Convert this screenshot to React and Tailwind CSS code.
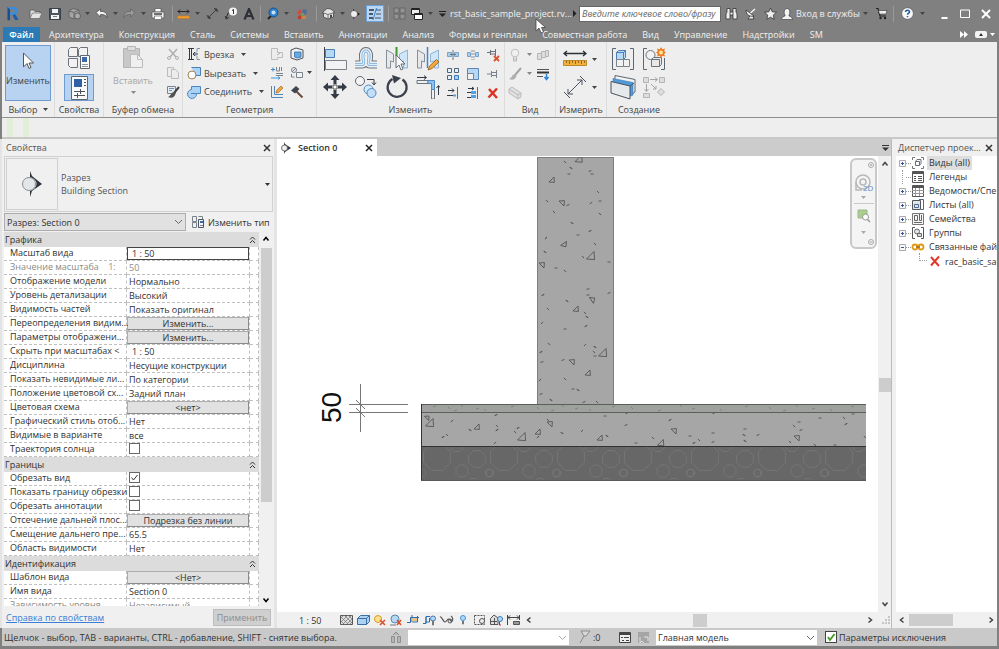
import { useState } from "react";
import clsx from "clsx";

const TABS = [
  "Архитектура",
  "Конструкция",
  "Сталь",
  "Системы",
  "Вставить",
  "Аннотации",
  "Анализ",
  "Формы и генплан",
  "Совместная работа",
  "Вид",
  "Управление",
  "Надстройки",
  "SM",
];

const SECTIONS = [
  {
    title: "Графика",
    rows: [
      { label: "Масштаб вида", value: "1 : 50", kind: "boxed" },
      { label: "Значение масштаба    1:", value: "50", kind: "muted" },
      { label: "Отображение модели", value: "Нормально" },
      { label: "Уровень детализации", value: "Высокий" },
      { label: "Видимость частей", value: "Показать оригинал" },
      { label: "Переопределения видим...", value: "Изменить...", kind: "button" },
      { label: "Параметры отображени...", value: "Изменить...", kind: "button" },
      { label: "Скрыть при масштабах <", value: "1 : 50", kind: "indent" },
      { label: "Дисциплина", value: "Несущие конструкции" },
      { label: "Показать невидимые ли...", value: "По категории" },
      { label: "Положение цветовой сх...", value: "Задний план" },
      { label: "Цветовая схема", value: "<нет>", kind: "button" },
      { label: "Графический стиль отоб...", value: "Нет" },
      { label: "Видимые в варианте", value: "все" },
      { label: "Траектория солнца", value: false, kind: "check" },
    ],
  },
  {
    title: "Границы",
    rows: [
      { label: "Обрезать вид", value: true, kind: "check" },
      { label: "Показать границу обрезки", value: false, kind: "check" },
      { label: "Обрезать аннотации", value: false, kind: "check" },
      { label: "Отсечение дальней плос...", value: "Подрезка без линии", kind: "button" },
      { label: "Смещение дальнего пре...", value: "65.5" },
      { label: "Область видимости", value: "Нет" },
    ],
  },
  {
    title: "Идентификация",
    rows: [
      { label: "Шаблон вида", value: "<Нет>", kind: "button" },
      { label: "Имя вида", value: "Section 0" },
      { label: "Зависимость уровня", value: "Независимый", kind: "muted" },
    ],
  },
];

function Svg({ w = 14, h = w, className, children }) {
  return (
    <svg
      width={w}
      height={h}
      viewBox={`0 0 ${w} ${h}`}
      fill="none"
      className={clsx("shrink-0", className)}
      aria-hidden="true"
    >
      {children}
    </svg>
  );
}

function Caret({ className = "text-[#444]" }) {
  return (
    <Svg w={5} h={3} className={className}>
      <path d="M0 0h5L2.500 3z" fill="currentColor" />
    </Svg>
  );
}

function Chevron({ dir = "down", className = "text-[#444]" }) {
  const paths = {
    down: "M1.500 2.500 4 5.500l2.500-3",
    up: "M1.500 5.500 4 2.500l2.500 3",
    left: "M5.500 1.500 2.500 4l3 2.500",
    right: "M2.500 1.500 5.500 4l-3 2.500",
  };
  return (
    <Svg w={8} className={className}>
      <path d={paths[dir]} stroke="currentColor" strokeWidth="1.500" />
    </Svg>
  );
}

function SelectArrow({ className }) {
  return (
    <Svg w={9} h={6} className={clsx("absolute pointer-events-none", className)}>
      <path d="m1 1 3.500 3.500L8 1" stroke="currentColor" />
    </Svg>
  );
}

function IconButton({ label, className, children }) {
  return (
    <button title={label} className={clsx("flex items-center justify-center", className)}>
      {children}
    </button>
  );
}

function Divider() {
  return <span className="w-1 h-4 flex justify-center"><i className="w-px h-full bg-[#9a9a9a]" /></span>;
}

function QuickAccess() {
  return (
    <div className="flex items-center shrink-0 h-[27px] text-[#303030]">
      <IconButton label="Revit" className="w-[25px] h-full">
        <Svg w={13} h={15}>
          <path d="M1.500 1 4 2.500V14l-2.500.5z" fill="#174f8f" />
          <path d="M1.500 1H8c4.500 0 5 6 1.500 7.500L12.500 14H9L6.500 9H4V6.500h3.500c1.800 0 1.800-3 0-3H4z" fill="#3b8ddb" />
          <path d="M6.500 9 9 14h3.500l-3-5.500z" fill="#1d5da6" />
        </Svg>
      </IconButton>
      <IconButton label="Открыть" className="w-5 h-full">
        <Svg w={13} h={12}>
          <path d="M1 10V2h4l1 1.500h5V5" fill="#ddd" stroke="#555" strokeWidth=".8" />
          <path d="M1 10.500 3.500 5H13l-2.500 5.500z" fill="#e4e4e4" stroke="#666" strokeWidth=".7" />
        </Svg>
      </IconButton>
      <IconButton label="Сохранить" className="w-5 h-full">
        <Svg w={12}>
          <path d="M.5.500h11v11H.5z" fill="#4b535e" stroke="#3a4048" />
          <path d="M3 1h6v4H3zM2 7h8v4H2z" fill="#f2f2f2" />
          <path d="M4 8.500h4" stroke="#777" />
        </Svg>
      </IconButton>
      <IconButton label="Синхронизировать" className="w-[18px] h-full">
        <Svg w={13}>
          <path d="M1 4 5 1.500 11 3v6l-5 3-5-2z" fill="#a4a4a4" stroke="#666" />
          <path d="M1 4l5 1.500L11 3M6 5.500V12" stroke="#666" />
          <circle cx="9.500" cy="9" r="3" fill="#aaa" stroke="#5f5f5f" />
        </Svg>
      </IconButton>
      <IconButton label="Параметры синхронизации" className="w-2 h-full"><Caret /></IconButton>
      <IconButton label="Отменить" className="w-[21px] h-full">
        <Svg w={13} h={11}>
          <path d="M1 4.500 5.500 1v2.500c4-.5 7 1.500 6.500 6.500-1-3-3-3.500-6.500-3.500V9z" fill="#f4f4f4" stroke="#444" strokeWidth=".7" />
        </Svg>
      </IconButton>
      <IconButton label="История отмен" className="w-1.5 h-full"><Caret /></IconButton>
      <IconButton label="Повторить" className="w-[22px] h-full">
        <Svg w={13} h={11}>
          <path d="M12 4.500 7.500 1v2.500C3.500 3 .5 5 1 10c1-3 3-3.500 6.500-3.500V9z" fill="#999" stroke="#606060" strokeWidth=".7" />
        </Svg>
      </IconButton>
      <IconButton label="История повторов" className="w-1.5 h-full"><Caret /></IconButton>
      <IconButton label="Печать" className="w-6 h-full">
        <Svg w={14} h={12}>
          <path d="M4 .5h6V4H4z" fill="#fff" stroke="#555" strokeWidth=".7" />
          <path d="M1 4h12v6H1z" fill="#eee" stroke="#555" strokeWidth=".7" />
          <path d="M3 6h8" stroke="#444" strokeWidth="1.500" />
          <path d="M3.500 8h7v3.500h-7z" fill="#fff" stroke="#666" strokeWidth=".7" />
        </Svg>
      </IconButton>
      <Divider />
      <IconButton label="Измерить" className="w-[18px] h-full">
        <Svg w={13} h={12}>
          <path d="M1 3.500h11M3 1.500l-2 2 2 2M10 1.500l2 2-2 2" stroke="#222" />
          <path d="M.5 8h12v2.500H.5z" fill="#f0a030" stroke="#c8701a" strokeWidth=".6" />
        </Svg>
      </IconButton>
      <IconButton label="Варианты измерения" className="w-2.5 h-full"><Caret /></IconButton>
      <IconButton label="Параллельный размер" className="w-5 h-full">
        <Svg w={13}>
          <path d="M2 11 11 2M1 8.500l3.500 3.500M8.500 1 12 4.500M2 8v3h3M8 2h3v3" stroke="#2e2e2e" strokeWidth=".8" />
        </Svg>
      </IconButton>
      <IconButton label="Марка" className="w-[18px] h-full">
        <Svg w={13}>
          <circle cx="8" cy="4.500" r="4" fill="#f5f5f5" />
          <path d="M7 3.500 8.500 2.500V7" stroke="#333" />
          <path d="M1 12l2-6h1M1 12l3-1.500M1 12 .500 9" stroke="#333" />
        </Svg>
      </IconButton>
      <IconButton label="Текст" className="w-[18px] h-full">
        <Svg w={12}>
          <path d="M1.500 11.500 6 1l4.500 10.500M3 8h6" stroke="#2c2f33" strokeWidth="2.200" />
        </Svg>
      </IconButton>
      <Divider />
      <IconButton label="3D вид" className="w-5 h-full">
        <Svg w={13}>
          <path d="m2 12 4-4" stroke="#222" strokeWidth="2" />
          <circle cx="7.500" cy="5.500" r="4.500" fill="#2f83d0" stroke="#174f86" />
          <circle cx="7.500" cy="5.500" r="2" fill="#c5e1f8" />
        </Svg>
      </IconButton>
      <IconButton label="Варианты вида" className="w-2 h-full"><Caret /></IconButton>
      <IconButton label="Визуализация" className="w-6 h-full">
        <Svg w={12}>
          <path d="M1 4.500 4 1l2 3-3 3z" fill="#d8483c" />
          <path d="M2 8l3-1v4H2z" fill="#c33a30" />
          <path d="m7 1 4 1-1 5-4-2z" fill="#4f6f96" />
          <path d="m6 7 4 1v3H6z" fill="#c58645" />
          <path d="M5 5h3v3H5z" fill="#6c9a58" />
        </Svg>
      </IconButton>
      <Divider />
      <IconButton label="3D вид по умолчанию" className="w-5 h-full">
        <Svg w={13}>
          <path d="M0 6 5 1.500 9 2l4 3.500-1.500.5v4L6 12l-4.500-2V6z" fill="#e4e4e4" stroke="#444" strokeWidth=".8" />
          <path d="m1.500 6 4.500 1.500L12 5.500M6 7.500V12" stroke="#555" strokeWidth=".8" />
          <path d="M8 8l2-.5v3L8 11z" fill="#444" />
        </Svg>
      </IconButton>
      <IconButton label="Варианты 3D вида" className="w-2 h-full"><Caret /></IconButton>
      <IconButton label="Разрез" className="w-[18px] h-full">
        <Svg w={12}>
          <path d="M4 1 11 6 4 11z" fill="#222" />
          <circle cx="5" cy="6" r="3.500" fill="#eee" stroke="#444" strokeWidth=".6" />
        </Svg>
      </IconButton>
      <IconButton label="Тонкие линии" className="w-[18px] h-[17px] mx-0.5 bg-[#b9d6f3] border border-[#6ba0d8]">
        <Svg w={14}>
          <path d="M1 3h5M1 7h4M1 11h4" stroke="#26313f" strokeWidth="1.500" />
          <path d="M8 3h5M8 7h5M7 11h6" stroke="#26313f" strokeWidth=".8" />
          <path d="M8.500 1 5 13" stroke="#3682c9" />
        </Svg>
      </IconButton>
      <Divider />
      <IconButton label="Закрыть неактивные" className="w-[18px] h-full">
        <Svg w={13}>
          <path d="M1 1h5v5H1zM7 1h5v5H7zM1 7h5v5H1zM7 7h5v5H7z" fill="#929292" stroke="#5f5f5f" strokeWidth=".8" />
        </Svg>
      </IconButton>
      <IconButton label="Переключение окон" className="w-[18px] h-full">
        <Svg w={14}>
          <path d="M1.500 1.500h8v6h-8z" fill="#eee" stroke="#222" />
          <path d="M4.500 6.500h8v6h-8z" fill="#fff" stroke="#222" />
          <path d="M1 2.500h9M4 7.500h9" stroke="#222" />
        </Svg>
      </IconButton>
      <IconButton label="Список окон" className="w-2 h-full"><Caret /></IconButton>
      <IconButton label="Настройка панели" className="w-4 h-full">
        <Svg w={7} h={6}>
          <path d="M0 .5h7" stroke="#222" />
          <path d="M0 2.500h7L3.500 6z" fill="#222" />
        </Svg>
      </IconButton>
    </div>
  );
}

function TitleBar() {
  return (
    <header className="flex items-center h-[27px] bg-[#808080] text-[#f0f0f0]">
      <QuickAccess />
      <h1 className="w-[122px] shrink-0 whitespace-nowrap">rst_basic_sample_project.rv...</h1>
      <Svg w={5} h={7} className="mr-0.5">
        <path d="M1 0v7l3.500-3.500z" fill="#222" />
      </Svg>
      <input
        aria-label="Поиск"
        placeholder="Введите ключевое слово/фразу"
        className="w-[142px] h-4 px-0.5 bg-white border border-[#666] italic placeholder:text-[#666] text-black"
      />
      <IconButton label="Поиск" className="w-5 h-full">
        <Svg w={13}>
          <path d="M2 1.500h3V5h3V1.500h3V5l1 2v5H8V8H5v4H1V7l1-2z" fill="#eee" stroke="#333" strokeWidth=".8" />
          <path d="M5 5v3M8 5v3" stroke="#333" strokeWidth=".8" />
        </Svg>
      </IconButton>
      <IconButton label="Связь" className="w-5 h-full">
        <Svg w={12}>
          <path d="M1 2c0 5 4 7 8 6zM5 8l-2 3h6L8 8" fill="#eee" stroke="#333" strokeWidth=".8" />
          <path d="m5.500 5 4.500-4" stroke="#fff" strokeWidth="1.200" />
        </Svg>
      </IconButton>
      <IconButton label="Избранное" className="w-[18px] h-full">
        <Svg w={13}>
          <path d="m6.500 1 1.700 3.800 4.300.4-3.200 2.900.9 4.200-3.700-2.100-3.700 2.100.9-4.200L.5 5.200l4.300-.4z" fill="#eee" stroke="#333" strokeWidth=".8" />
        </Svg>
      </IconButton>
      <button className="flex items-center h-full gap-[3px] pl-0.5">
        <Svg w={12}>
          <path d="M.5 11.500c0-2 2-3 3.500-3.500V7C2.500 5 3 .5 6 .5S9.500 5 8 7v1c1.500.5 3.500 1.500 3.500 3.500z" fill="#f2f2f2" stroke="#333" strokeWidth=".6" />
        </Svg>
        <span className="whitespace-nowrap">Вход в службы</span>
        <Caret />
      </button>
      <IconButton label="Магазин" className="ml-1 w-5 h-full">
        <Svg w={13}>
          <path d="M1 1.500h2L5 9h6" stroke="#222" strokeWidth="1.200" />
          <path d="M3.500 3.500H12L11 7H4.500z" fill="#f0f0f0" stroke="#333" strokeWidth=".6" />
          <circle cx="5.500" cy="11" r="1.200" fill="#222" />
          <circle cx="10" cy="11" r="1.200" fill="#222" />
        </Svg>
      </IconButton>
      <Divider />
      <IconButton label="Справка" className="w-6 h-full">
        <Svg w={13}>
          <circle cx="6.500" cy="6.500" r="5.800" fill="#f8f8f8" stroke="#555" strokeWidth=".6" />
          <path d="M4.500 5c0-2.500 4-2.500 4 0 0 1.200-2 1.300-2 2.800M6.500 9v1.300" stroke="#2458a8" strokeWidth="1.500" />
        </Svg>
      </IconButton>
      <Caret />
      <div className="flex items-center gap-[11px] ml-auto mr-2 h-full">
        <button title="Свернуть" className="h-full">
          <Svg w={9} h={10}><path d="M1.500 9h6" stroke="#fff" strokeWidth="2" /></Svg>
        </button>
        <button title="Развернуть" className="h-full">
          <Svg w={10} h={9}><path d="M.5 1h9v7.500h-9z" stroke="#fff" /></Svg>
        </button>
        <button title="Закрыть" className="h-full">
          <Svg w={10}><path d="m1 1 8 8M9 1 1 9" stroke="#fff" strokeWidth="2" /></Svg>
        </button>
      </div>
    </header>
  );
}

function TabBar() {
  return (
    <nav className="flex items-center h-[15px] pl-[3px] bg-[#808080] text-[#f0f0f0]">
      <button className="w-[37px] h-full mr-[9px] bg-[#2b79b5] text-white font-semibold">Файл</button>
      <div className="flex gap-[15px]">
        {TABS.map((tab) => (
          <button key={tab} className="whitespace-nowrap">
            {tab}
          </button>
        ))}
      </div>
      <div className="flex items-center gap-[7px] ml-auto mr-[4px]">
        <Svg w={8} h={7}><path d="M0 0v7l4-3.500zM4 0v7l4-3.500z" fill="#fff" /></Svg>
        <Svg w={12} h={7}>
          <rect width="12" height="7" rx="2" fill="#f4f4f4" />
          <path d="M4 5h4L6 2z" fill="#333" />
        </Svg>
        <Caret className="text-white -ml-1" />
      </div>
    </nav>
  );
}

function Panel({ title, className, bodyClass, children }) {
  return (
    <section className={clsx("flex flex-col border-r border-[#dcdcdc]", className)}>
      <div className={clsx("h-[59px]", bodyClass)}>{children}</div>
      <h2 className="h-4 flex items-center justify-center gap-[5px] whitespace-nowrap">{title}</h2>
    </section>
  );
}

// two facing elements with a gap for the axis, reused by the mirror icons
function MirrorShapes() {
  return (
    <>
      <path d="M1.500 3v18h4v-7l3 1V7z" fill="#e6e8ea" stroke="#87909a" />
      <path d="M22.500 3v18h-4v-7l-4 1V7z" fill="#cfe5f8" stroke="#8fb4d4" />
    </>
  );
}

const big = {
  align: (
    <Svg w={24}>
      <path d="M1.500 0v24" stroke="#3f4650" />
      <path d="M2.500 2.500h9v8h-9z" fill="#b7d8f5" stroke="#4a7fb5" />
      <path d="M2.500 13.500h21v9h-21z" fill="#f2f2f2" stroke="#7a828b" />
    </Svg>
  ),
  offset: (
    <Svg w={24}>
      <path d="M1 17.500h7c3 0 1-4 1-7.500C8 2 16 2 15 10c0 3.500-2 7.500 1 7.500h7" stroke="#6b747d" strokeWidth="8" />
      <path d="M1 17.500h7c3 0 1-4 1-7.500C8 2 16 2 15 10c0 3.500-2 7.500 1 7.500h7" stroke="#f0f0f0" strokeWidth="6" />
      <path d="M1 17.500h7c3 0 1-4 1-7.500C8 2 16 2 15 10c0 3.500-2 7.500 1 7.500h7" stroke="#6fa8da" strokeWidth="3" />
      <path d="M1 17.500h7c3 0 1-4 1-7.500C8 2 16 2 15 10c0 3.500-2 7.500 1 7.500h7" stroke="#dcecf9" strokeWidth="1.500" />
    </Svg>
  ),
  mirrorPick: (
    <Svg w={24}>
      <MirrorShapes />
      <path d="M11.500 0v9" stroke="#3f9a32" strokeWidth="2" />
      <path d="M11 8v13l3-3 2 5 2-1-2-5h4z" fill="#f8f8f8" stroke="#59616b" strokeWidth=".9" />
    </Svg>
  ),
  mirrorDraw: (
    <Svg w={24}>
      <MirrorShapes />
      <path d="M11.500 0v21" stroke="#3c87c8" strokeWidth="1.500" />
      <path d="m12 23 1.500-4 7-6.500 2.500 2.500-7 6.500z" fill="#f3a73c" stroke="#8d5a15" strokeWidth=".8" />
    </Svg>
  ),
  move: (
    <Svg w={24}>
      <path d="M12 0 7.500 5h3v4h3V5h3zM12 24l-4.500-5h3v-4h3v4h3zM0 12l5-4.500v3h4v3H5v3zM24 12l-5-4.500v3h-4v3h4v3z" fill="#343b46" />
      <path d="M10 10h4v4h-4z" fill="#fff" stroke="#555" />
    </Svg>
  ),
  copy: (
    <Svg w={24}>
      <circle cx="6" cy="6" r="4.500" fill="#f4f4f4" stroke="#5d6771" />
      <path d="M13 4.500h7V9m-2-1.500L20 10l2-2.500" stroke="#343b46" />
      <circle cx="14.500" cy="14.500" r="4.500" fill="#d5e9fa" stroke="#4f8ac2" />
      <circle cx="17.500" cy="18" r="4.500" fill="#c3dff8" stroke="#4f8ac2" />
    </Svg>
  ),
  rotate: (
    <Svg w={24}>
      <path d="M17.500 4.500A9.500 9.500 0 1 1 7.500 4" stroke="#3a414c" strokeWidth="2.200" />
      <path d="m7 0 9 3-7 5.500z" fill="#3a414c" />
    </Svg>
  ),
  trim: (
    <Svg w={24}>
      <path d="M1 5.500h11v3H1zM15.500 14h3v10h-3z" fill="#f1f1f1" stroke="#6b747d" />
      <path d="M12 5.500h6.500v9h-3v-6H12z" fill="#8fc3ee" stroke="#4f8ac2" />
      <path d="M1 2.500h9m-2-2 2.500 2L8 4.500M22.500 20v-9m-2 2 2-2.500 1.500 2" stroke="#343b46" />
    </Svg>
  ),
  measure: (
    <Svg w={24}>
      <path d="M1 6.500h22M4 4 1 6.500 4 9M20 4l3 2.500L20 9" stroke="#2b3038" strokeWidth="1.300" />
      <path d="M.5 13.500h23v5H.5z" fill="#f2b23a" stroke="#c08a2c" />
      <path d="M3.500 14v2M6.500 14v3M9.500 14v2M12.500 14v3M15.500 14v2M18.500 14v3M21.500 14v2" stroke="#7a5210" strokeWidth=".8" />
    </Svg>
  ),
  dimension: (
    <Svg w={24}>
      <path d="M5 19 19 5M1 17l6 6M17 1l6 6M5 14v5h5M14 5h5v5" stroke="#4b535e" />
    </Svg>
  ),
  assembly: (
    <Svg w={24}>
      <path d="M5 1.500H1.500v21H5M19 1.500h3.500v21H19" stroke="#5d6771" />
      <path d="M5.500 5.500h7l2-2h-7zM5.500 5.500v7h7v-7zM12.500 5.500l2-2v7l-2 2z" fill="#b8daf6" stroke="#4a7fb5" />
      <path d="M5.500 12.500h7v7h-7zM12.500 12.500h6v7h-6z" fill="#f1f1f1" stroke="#7a828b" />
    </Svg>
  ),
  group: (
    <Svg w={24}>
      <path d="M5 1.500H1.500v21H5M22.500 11v11.500H19" stroke="#5d6771" />
      <circle cx="8.500" cy="8" r="4.500" fill="#f3f3f3" stroke="#6b747d" />
      <path d="M9.500 12.500h8v7h-8zM9.500 12.500l2-2h8v7l-2 2" fill="#e8e8e8" stroke="#6b747d" />
      <path d="m19 0 1.300 2.300L23 1.500l-.8 2.700L24 5.500l-1.800 1.300.8 2.700-2.700-.8L19 11l-1.300-2.300-2.700.8.8-2.700L14 5.500l1.800-1.300L15 1.500l2.700.8z" fill="#ee7d22" />
      <circle cx="19" cy="5.500" r="2" fill="#ffe89a" />
    </Svg>
  ),
  parts: (
    <Svg w={26}>
      <path d="m5 1.500 20 4V18l-3 2L5 15z" fill="#f3f3f3" stroke="#5d6771" />
      <path d="m3 4.500 20 4V21l-2 1L3 17z" fill="#4f9bdc" stroke="#3a78b0" strokeWidth=".6" />
      <path d="m1 7.500 19 4.500v13L1 19z" fill="#e6e9ec" stroke="#4b535e" />
      <path d="m20 12 4-3" stroke="#4b535e" />
    </Svg>
  ),
  similar: (
    <Svg w={24}>
      <path d="M1.500 2.500h5v5h-5zM17.500 2.500h5v5h-5zM1.500 18.500h6v4h-6zM19 13.500l3.500 3.500-3.500 3.500-3.500-3.500z" fill="#ddd" stroke="#b5b5b5" />
      <path d="M8 4.500h7m-2-2 2.500 2-2.500 2M4.500 9v7m-2-2 2 2.500 2-2.500M9 9l5 5m0-3v3h-3" stroke="#a5a5a5" />
    </Svg>
  ),
};

const small = {
  cut: <Svg><path d="M3 2l7 8M11 2l-7 8" stroke="#b0b0b0" strokeWidth="1.500" /><circle cx="3" cy="11" r="1.500" stroke="#b0b0b0" /><circle cx="11" cy="11" r="1.500" stroke="#b0b0b0" /></Svg>,
  copyClip: <Svg><path d="M1.500 1.500h6v9h-6z" fill="#ececec" stroke="#bcbcbc" /><path d="M5.500 3.500h4l3 3v6h-7z" fill="#ececec" stroke="#bcbcbc" /></Svg>,
  match: <Svg><path d="M1.500 1.500h8v7h-8z" fill="#e9edf1" stroke="#7a828b" /><path d="M3 3.500h5M3 5.500h3" stroke="#6c90b8" /><path d="m13 2-5 6" stroke="#444" strokeWidth="2" /><path d="M8 7c-3 0-3 4-6 5 4 2 7 0 7.500-3.500z" fill="#555" /></Svg>,
  cope: <Svg><path d="M1 1.500h6M1 12.500h6M2.500 2v10M4.500 2v10M11 7H6.500M8 5 6 7l2 2" stroke="#343b46" /><path d="M13 1.500h-3v3L8.500 6M8.500 8l1.500 1.500v3h3" stroke="#8b939b" /></Svg>,
  cutGeom: <Svg><path d="M4.500 1.500h9v8H8" fill="#a9d2f5" stroke="#4a7fb5" /><circle cx="5" cy="9" r="4" fill="#fff" stroke="#a08050" /></Svg>,
  join: <Svg><path d="M4.500 1.500h9v7H9.500a4.500 4.500 0 1 1-5-4z" fill="#a9d2f5" stroke="#4a86bd" /><path d="M4 8.500h5" stroke="#4a86bd" /></Svg>,
  joinRoof: <Svg><path d="M1.500 1.500h6v4h5v5h-5v2h-6z" fill="#ececec" stroke="#bcbcbc" /><path d="m7 8 3-2" stroke="#b0b0b0" /></Svg>,
  wallJoin: <Svg><path d="M1 3.500h4M3 1.500v4" stroke="#3c87c8" /><path d="M6.500 1v4h3V1M11.500 1v4M6 7.500h7M6 9.500h7" stroke="#7a828b" /><path d="M1 12h9m-2-1.500L10 12l-2 1.500" stroke="#3c97e0" /></Svg>,
  beam: <Svg><path d="M1.500 1v11.500H13M4.500 1v8.500H13" stroke="#4f86ba" /><path d="m6 8 .5-2.500 4.500-4.500 2 2-4.500 4.500z" fill="#f3a73c" stroke="#8d5a15" strokeWidth=".6" /></Svg>,
  face: <Svg><path d="m1 3 5-2 7 2v8l-6 2-6-2z" fill="#f0f0f0" stroke="#4b535e" /><path d="M4.500 5h6.500v5l-4 1-2.500-1z" fill="#6aa9e0" stroke="#2f6ca8" strokeWidth=".8" /></Svg>,
  split: <Svg><circle cx="4" cy="4" r="2.500" stroke="#7a828b" /><path d="M6.500 6.500h6v5h-6zM1.500 8v3h3M2 6l4-4" fill="#f4f4f4" stroke="#7a828b" /></Svg>,
  demolish: <Svg><path d="m6 6 6.500 6.500" stroke="#6b4a38" strokeWidth="2" /><path d="M1 5.500 6 1l3.500 3L5 8.500z" fill="#3f4650" /></Svg>,
  splitEl: <Svg><path d="M1.500 4.500h4v4h-4zM8.500 4.500h4v4h-4z" fill="#a8cff2" stroke="#7ba3c9" /><path d="M7 2v10M4 6.500h6" stroke="#6b747d" /></Svg>,
  splitGap: <Svg><path d="M1.500 4.500h3v4h-3zM9.500 4.500h3v4h-3z" fill="#a8cff2" stroke="#7ba3c9" /><path d="M6 2v10M8 2v10" stroke="#8b939b" strokeDasharray="2 1" /></Svg>,
  unpin: <Svg><path d="M1 4.500h3M4.500 2v5M5 3.500h4M5 6h4M9.500 1v7" stroke="#68707a" /><path d="m8 8 5 5M13 8l-5 5" stroke="#d8512a" strokeWidth="1.800" /></Svg>,
  array: <Svg><path d="M1.500 1.500h4v4h-4zM8.500 1.500h4v4h-4zM1.500 8.500h4v4h-4z" fill="#e8f2fa" stroke="#4f6478" /><path d="M8.500 8.500h4v4h-4z" fill="#a8cff2" stroke="#3c79b5" /></Svg>,
  scale: <Svg><path d="M1.500 1.500h11v11h-11z" fill="#b7d8f5" stroke="#5b88b3" /><path d="M1.500 6.500h6v6h-6z" fill="#f1f1f1" stroke="#7a828b" /></Svg>,
  pin: <Svg><path d="M1 7h4M5.500 4v6M6 5.500h4M6 8.500h4M10.500 3v8" stroke="#7a828b" /></Svg>,
  extend: <Svg><path d="M2 4.500h6M6 2.500l2 2-2 2M1 9.500h7" stroke="#343b46" /><path d="M7 9.500h3" stroke="#4fa0e5" strokeWidth="2" /><path d="M11.500 1v12" stroke="#5d6771" /></Svg>,
  extendMany: <Svg><path d="M2 2.500h6M6 1l2 1.500L6 4M1 6.500h5M1 11.500h5" stroke="#343b46" /><path d="M5 6.500h5M5 10.500h5" stroke="#4fa0e5" strokeWidth="3" /><path d="M11.500 1v12" stroke="#5d6771" /></Svg>,
  remove: <Svg><path d="m3 3 8 9M11 2.500 2.500 11.500" stroke="#dd3322" strokeWidth="2.500" /></Svg>,
  bulb: <Svg><circle cx="7" cy="5" r="3.800" fill="#f0f0f0" stroke="#c0c0c0" /><path d="M5.500 9v4h3V9M5.500 11h3" stroke="#b8b8b8" /></Svg>,
  boxes: <Svg><path d="M1.500 5.500h4v6h-4zM5.500 3.500h4v6h-4zM9.500 2.500h3v6h-3z" fill="#ddd" stroke="#b5b5b5" /></Svg>,
  brush: <Svg><path d="m13 1-6 7" stroke="#a5a5a5" strokeWidth="2" /><path d="M7 7c-3 0-3 4-6 5 4 2 7 0 7.500-3.500z" fill="#b0b0b0" /></Svg>,
  linework: <Svg><path d="M1 2.500h12" stroke="#555" /><path d="M1 5.500h12" stroke="#333" strokeWidth="2" /><path d="M1 9.500h6" stroke="#555" /><path d="M10.500 7v5m-2-2 2 2.500 2-2.500" stroke="#2f86d8" strokeWidth="1.500" /></Svg>,
  hideBox: <Svg><path d="m1 3 3-2 9 6v4l-3 2-9-6z" fill="#e0e0e0" stroke="#bcbcbc" /><path d="m1 3 9 6 3-2M10 9v4" stroke="#bcbcbc" /></Svg>,
};

function ToolText({ icon, children }) {
  return (
    <button className="flex items-center gap-[3px] h-[19px] whitespace-nowrap">
      {icon}
      {children}
      <Caret className="text-[#444] ml-1" />
    </button>
  );
}

function Cell({ children, className, name }) {
  return (
    <button title={name} className={clsx("flex items-center justify-center", className)}>
      {children}
    </button>
  );
}

function Ribbon() {
  return (
    <div className="flex h-[75px] mx-0.5 bg-[#eee] text-[#444]">
      <Panel
        className="w-[53px]"
        bodyClass="pt-[3px] px-[3px]"
        title={<>Выбор <Caret /></>}
      >
        <button className="w-full h-14 flex flex-col items-center gap-1 pt-1.5 bg-[#b7d3f1] border border-[#6f9bd1]">
          <Svg w={12} h={18}>
            <path d="M1.500 1v14l3.500-3.500 2 5 2-1-2-4.500h4.500z" fill="#fff" stroke="#555" />
          </Svg>
          Изменить
        </button>
      </Panel>
      <Panel title="Свойства" className="w-[49px]" bodyClass="pt-1 flex flex-col items-center gap-1">
        <button title="Свойства типа">
          <Svg w={24}>
            <path d="m1.500 3.500 2-2h7v9h-9zM11.500 3.500l2-2h7v9h-9zM1.500 12.500h9v9h-7l-2-2z" fill="#f2f2f2" stroke="#6b747d" />
            <path d="M13.500 9.500h9v13h-9z" fill="#fafafa" stroke="#5d6771" />
            <path d="M15 11h5v5h-5z" fill="#3a68ab" />
            <path d="M15 18.500h6M15 20.500h6" stroke="#8b939b" />
          </Svg>
        </button>
        <button title="Свойства" className="w-[30px] h-[27px] flex items-center justify-center bg-[#b7d3f1] border border-[#6f9bd1]">
          <Svg w={17} h={24}>
            <path d="M.5.500h16v23H.5z" fill="#fafafa" stroke="#5d6771" />
            <path d="M3 3h8v8H3z" fill="#2f5fa5" />
            <path d="M13 3.500h2M13 6.500h2M13 9.500h2M3 15.500h11M3 19.500h11M9.500 13v5M6.500 17v5" stroke="#4b535e" />
          </Svg>
        </button>
      </Panel>
      <Panel title="Буфер обмена" className="w-[79px]" bodyClass="flex pt-[3px] pl-[7px]">
        <button className="w-11 flex flex-col items-center gap-1 text-[#a6a6a6]">
          <Svg w={22} h={24}>
            <path d="M1.500 3.500h16v19h-16z" fill="#c8c8c8" stroke="#b5b5b5" />
            <path d="M5.500 1.500h8v4h-8z" fill="#ddd" stroke="#b5b5b5" />
            <path d="M8.500 9.500h7l5 5v8h-12z" fill="#f0f0f0" stroke="#bcbcbc" />
            <path d="M15.500 9.500v5h5" stroke="#bcbcbc" />
          </Svg>
          <span className="leading-4">Вставить</span>
          <Caret className="text-[#888] -mt-0.5" />
        </button>
        <div className="flex flex-col pl-2">
          <Cell name="Вырезать" className="size-[19px]">{small.cut}</Cell>
          <Cell name="Копировать" className="size-[19px]">{small.copyClip}</Cell>
          <Cell name="Копировать свойства" className="size-[19px]">{small.match}</Cell>
        </div>
      </Panel>
      <Panel title="Геометрия" className="w-[134px]" bodyClass="flex pt-[3px] pl-1">
        <div className="w-20 flex flex-col items-start">
          <ToolText icon={small.cope}>Врезка</ToolText>
          <ToolText icon={small.cutGeom}>Вырезать</ToolText>
          <ToolText icon={small.join}>Соединить</ToolText>
        </div>
        <div className="flex flex-col">
          <Cell name="Соединить крыши" className="w-5 h-[19px]">{small.joinRoof}</Cell>
          <Cell name="Соединение стен" className="w-5 h-[19px]">{small.wallJoin}</Cell>
          <Cell name="Соединение балок" className="w-5 h-[19px]">{small.beam}</Cell>
        </div>
        <div className="flex flex-col">
          <Cell name="Разделить грань" className="w-5 h-[19px]">{small.face}</Cell>
          <Cell name="Краска" className="w-5 h-[19px]">{small.split}</Cell>
          <Cell name="Снос" className="w-5 h-[19px]">{small.demolish}</Cell>
        </div>
        <div className="flex items-center pb-0.5"><Caret /></div>
      </Panel>
      <Panel title="Изменить" className="w-[188px]" bodyClass="flex pt-[3px] pl-0.5">
        <div className="grid grid-cols-4 w-[124px] h-14">
          <Cell name="Выровнять">{big.align}</Cell>
          <Cell name="Смещение">{big.offset}</Cell>
          <Cell name="Зеркало - выбрать ось">{big.mirrorPick}</Cell>
          <Cell name="Зеркало - нарисовать ось">{big.mirrorDraw}</Cell>
          <Cell name="Переместить">{big.move}</Cell>
          <Cell name="Копировать">{big.copy}</Cell>
          <Cell name="Повернуть">{big.rotate}</Cell>
          <Cell name="Обрезать">{big.trim}</Cell>
        </div>
        <div className="grid grid-cols-3 w-[60px] h-[57px]">
          <Cell name="Разделить">{small.splitEl}</Cell>
          <Cell name="Разделить с зазором">{small.splitGap}</Cell>
          <Cell name="Снять закрепление">{small.unpin}</Cell>
          <Cell name="Массив">{small.array}</Cell>
          <Cell name="Масштаб">{small.scale}</Cell>
          <Cell name="Закрепить">{small.pin}</Cell>
          <Cell name="Удлинить">{small.extend}</Cell>
          <Cell name="Удлинить несколько">{small.extendMany}</Cell>
          <Cell name="Удалить">{small.remove}</Cell>
        </div>
      </Panel>
      <Panel title="Вид" className="w-[51px]" bodyClass="flex pt-[3px]">
        <div className="grid grid-cols-[20px_8px_20px] h-[57px] items-center justify-items-center">
          <Cell name="Показать">{small.bulb}</Cell>
          <Caret className="text-[#888]" />
          <Cell name="Переместить категорию">{small.boxes}</Cell>
          <Cell name="Переопределить">{small.brush}</Cell>
          <Caret className="text-[#888]" />
          <Cell name="Линии">{small.linework}</Cell>
          <Cell name="Рамка выбора">{small.hideBox}</Cell>
        </div>
      </Panel>
      <Panel title="Измерить" className="w-[51px]" bodyClass="pt-[3px] pl-[7px]">
        <div className="grid grid-cols-[24px_14px] h-14 items-center justify-items-center">
          <Cell name="Линейка">{big.measure}</Cell>
          <Caret />
          <Cell name="Размер">{big.dimension}</Cell>
          <Caret />
        </div>
      </Panel>
      <Panel title="Создание" className="w-[64px] border-r-0" bodyClass="pt-[3px]">
        <div className="grid grid-cols-2 w-[62px] h-14">
          <Cell name="Создать сборку">{big.assembly}</Cell>
          <Cell name="Создать группу">{big.group}</Cell>
          <Cell name="Создать части">{big.parts}</Cell>
          <Cell name="Создать подобный">{big.similar}</Cell>
        </div>
      </Panel>
    </div>
  );
}

function PropValue({ id, row }) {
  const [checked, setChecked] = useState(row.value === true);

  if (row.kind === "button") {
    return (
      <button
        id={id}
        className="block w-full h-[13px] leading-[11px] bg-[#e1e1e1] border border-[#adadad] border-b-[#8a8a8a] border-r-[#8a8a8a]"
      >
        {row.value}
      </button>
    );
  }
  if (row.kind === "check") {
    return (
      <span className="relative block size-[11px] ml-0.5">
        <input
          id={id}
          type="checkbox"
          checked={checked}
          onChange={(e) => setChecked(e.target.checked)}
          className="block appearance-none size-[11px] bg-white border border-[#666]"
        />
        {checked && (
          <Svg w={11} className="absolute inset-0 pointer-events-none">
            <path d="m2.500 5.500 2 2.500 4-5" stroke="#333" />
          </Svg>
        )}
      </span>
    );
  }
  return (
    <input
      id={id}
      defaultValue={row.value}
      className={clsx(
        "block w-full bg-transparent",
        row.kind === "boxed" ? "h-[13px] border border-[#444] pl-1" : "h-3",
        row.kind === "indent" && "pl-[5px]",
        row.kind === "muted" && "text-[#8b8b83]",
        row.kind !== "boxed" && row.kind !== "indent" && "pl-0.5",
      )}
    />
  );
}

function PropertiesPalette() {
  return (
    <aside className="flex flex-col w-[272px] shrink-0 ml-0.5 pl-0.5 bg-[#f0f0f0]">
      <div className="flex items-center h-[17px] px-0.5 text-[#555]">
        <h2 className="grow">Свойства</h2>
        <button title="Закрыть" className="mr-px">
          <Svg w={8}><path d="m1 1 6 6M7 1 1 7" stroke="#333" strokeWidth="1.500" /></Svg>
        </button>
      </div>
      <button className="flex items-center h-14 border border-[#d0d0d0] mr-px text-left text-[#555]">
        <span className="w-[52px] h-[52px] ml-px flex items-center justify-center border border-[#cfcfcf]">
          <Svg w={22} h={26}>
            <path d="M9 0v6.500a6.500 6.500 0 0 1 0 13V26l2-6 10-7L11 5z" fill="#2e333b" />
            <circle cx="8" cy="13" r="6.500" fill="#e4e5e8" stroke="#8a8d92" />
          </Svg>
        </span>
        <span className="grow pl-[3px] leading-[13px]">
          Разрез
          <br />
          Building Section
        </span>
        <Caret className="text-[#333] mr-0.5" />
      </button>
      <div className="flex h-[18px] my-px">
        <label className="relative w-[182px]">
          <select
            aria-label="Экземпляр"
            className="appearance-none w-full h-full pl-0.5 bg-[#e1e1e1] border border-[#adadad] text-[#333]"
          >
            <option>Разрез: Section 0</option>
          </select>
          <SelectArrow className="right-[3px] top-1.5 text-[#666]" />
        </label>
        <button className="flex items-center gap-[3px] pl-[5px] text-[#333] whitespace-nowrap">
          <Svg w={14}>
            <path d="M1.500 1.500h4v5h-4zM1.500 7.500h4v5h-4zM7.500 1.500h4v3" stroke="#7a828b" />
            <path d="M7.500 4.500h5v8h-5z" fill="#f2f5f8" stroke="#4b535e" />
            <path d="M9 6h3v2H9z" fill="#3a68ab" />
            <path d="M9 10.500h3" stroke="#7a828b" />
          </Svg>
          Изменить тип
        </button>
      </div>
      <div className="flex grow basis-0 min-h-0 overflow-hidden">
        <div className="w-[255px] overflow-hidden bg-white">
          <table className="w-full table-fixed border-separate border-spacing-0 leading-[13px] text-[#2f3133]">
            <colgroup>
              <col className="w-[123px]" />
              <col className="w-[123px]" />
              <col />
            </colgroup>
            {SECTIONS.map((section, s) => (
              <tbody key={section.title}>
                <tr>
                  <th colSpan={2} className="h-[15px] p-0 pl-px bg-[#dcdcdc] text-left font-normal">
                    {section.title}
                  </th>
                  <td className="h-[15px] p-0 bg-[#dcdcdc]">
                    <button title="Свернуть" className="block -ml-px">
                      <Svg w={7} h={8}><path d="m1 3.500 2.500-2.500L6 3.500M1 7l2.500-2.500L6 7" stroke="#333" /></Svg>
                    </button>
                  </td>
                </tr>
                {section.rows.map((row, r) => {
                  const id = `prop-${s}-${r}`;
                  return (
                    <tr key={id}>
                      <td
                        className={clsx(
                          "h-[14px] p-0 pl-1.5 border-b border-r border-dashed border-[#c0c0c0] whitespace-pre",
                          row.kind === "muted" && "text-[#8b8b83]",
                        )}
                      >
                        <label htmlFor={id} className="block h-[13px] leading-3">{row.label}</label>
                      </td>
                      <td className="h-[14px] p-0 border-b border-r border-dashed border-[#c0c0c0] align-top">
                        <PropValue id={id} row={row} />
                      </td>
                      <td className="h-[14px] p-0 border-b border-r border-dashed border-[#c0c0c0]" />
                    </tr>
                  );
                })}
              </tbody>
            ))}
          </table>
        </div>
        <div className="flex flex-col items-center w-3.5 py-0.5 bg-[#f0f0f0]">
          <Chevron dir="up" className="my-px" />
          <div className="w-[11px] h-[254px] mt-1 bg-[#cdcdcd]" />
          <Chevron className="mt-auto" />
        </div>
      </div>
      <div className="flex items-center justify-between h-[22px] pl-0.5 pr-[3px]">
        <a href="#help" className="text-[#3a7fd5] underline">Справка по свойствам</a>
        <button disabled className="w-[58px] h-[17px] bg-[#cfcfcf] border border-[#bdbdbd] text-[#8d8d8d]">
          Применить
        </button>
      </div>
    </aside>
  );
}

// x, y, angle of the short aggregate strokes
const DASHES = [
  [565, 162, 40], [571, 168, 30], [569, 174, 0], [590, 171, -10], [592, 174, 0], [598, 192, 45],
  [547, 201, 40], [591, 203, -35], [600, 201, 0], [568, 205, -20], [554, 212, 50], [600, 214, 35],
  [572, 223, 30], [590, 231, -30], [578, 235, 0], [546, 238, -60], [595, 244, 40], [545, 252, 30],
  [583, 257, 50], [609, 262, 5], [556, 268, 0], [565, 271, 35], [588, 289, -10], [588, 295, 0],
  [609, 293, -20], [543, 295, -30], [567, 301, 30], [548, 309, 45], [585, 313, 40], [587, 317, 30],
  [542, 323, -50], [586, 326, -30], [565, 329, 0], [549, 344, 35], [585, 345, -45], [595, 347, 30],
  [541, 352, -30], [542, 362, -15], [563, 360, -25], [594, 352, 50], [595, 356, 0], [540, 380, -50],
  [565, 379, 40], [573, 389, 0], [578, 390, 30], [541, 394, -20], [551, 400, 30], [584, 402, -20], [597, 402, 45],
  [452, 421, -35], [443, 437, -30], [447, 435, 45], [470, 430, 30], [496, 415, -30], [497, 426, 45],
  [497, 430, -30], [495, 443, -40], [515, 432, 50], [518, 428, -30], [548, 420, 40], [538, 437, -40],
  [562, 433, 30], [582, 431, -50], [605, 416, 0], [607, 436, 30], [627, 413, -30], [626, 425, -20],
  [636, 443, 0], [653, 438, 40], [670, 420, -30], [690, 436, 0], [694, 443, -30], [699, 440, 40],
  [713, 433, 0], [713, 442, -20], [745, 429, 0], [744, 435, 30], [745, 441, 30], [758, 435, -20],
  [714, 413, -30], [790, 442, 40], [794, 426, 50], [799, 422, 0], [801, 430, -20], [820, 418, 0],
  [815, 445, 35], [835, 445, 0], [844, 418, 50], [846, 424, -30], [853, 414, 0], [865, 437, 40],
];

// x, y, size, angle of the triangular aggregate
const STONES = [
  [579, 159, 8, 0], [552, 180, 6, 0], [562, 203, 6, -90], [564, 244, 6, 10], [591, 256, 9, 0],
  [542, 265, 6, -90], [592, 300, 6, -80], [576, 309, 6, 0], [603, 353, 9, 0], [572, 362, 6, -90],
  [588, 373, 6, 0], [427, 418, 5, -90], [430, 423, 9, 0], [477, 427, 6, 0],
  [522, 437, 9, 0], [538, 432, 6, 0], [550, 424, 6, -90], [600, 438, 6, 0], [674, 431, 6, -90],
  [661, 443, 7, 0], [797, 438, 6, -90],
];

const SPECKS = [433, 448, 454, 461, 476, 484, 511, 537, 551, 562, 575, 589, 612, 631, 658, 680, 692, 720, 745, 769, 783, 796, 812, 830, 851];

function octagon(cx, cy, r) {
  return Array.from({ length: 8 }, (_, i) => {
    const a = ((i + 0.5) * Math.PI) / 4;
    return `${(cx + r * Math.cos(a)).toFixed(1)},${(cy + r * Math.sin(a)).toFixed(1)}`;
  }).join(" ");
}

function SectionDrawing() {
  return (
    <svg width="601" height="455" viewBox="277 156 601 455" fill="none" className="absolute left-0 top-0">
      <defs>
        <clipPath id="gravel"><path d="M421 447h445v33H421z" /></clipPath>
        <clipPath id="column"><path d="M537 157h76v247h-76zM421 404h445v42H421z" /></clipPath>
      </defs>
      <path d="M537 157h76v247h-76z" fill="#a6a6a6" />
      <path d="M537.500 157v247M613.500 157v247M537 157.500h76" stroke="#7d7d7d" />
      <path d="M421 404h445v9H421z" fill="#9fa19f" />
      <path d="M421 413h445v34H421z" fill="#a6a6a6" />
      <path d="M421 447h445v34H421z" fill="#676767" />
      <g clipPath="url(#gravel)" stroke="#787878" strokeWidth=".8">
        {[0, 1, 2, 3, 4, 5, 6].map((i) => (
          <g key={i} transform={`translate(${i * 67} 0)`}>
            <polygon points={octagon(437, 457, 14.5)} />
            <polygon points={octagon(477, 459, 9)} />
            <polygon points={octagon(457, 445, 7)} />
            <polygon points={octagon(462, 471, 6.5)} />
            <polygon points={octagon(490, 473, 4)} />
            <polygon points={octagon(422, 473, 4)} />
            <polygon points={octagon(473, 484, 6)} />
          </g>
        ))}
      </g>
      <g clipPath="url(#column)" stroke="#555" strokeWidth=".9">
        {DASHES.map(([x, y, a]) => (
          <path key={`${x}-${y}`} d="M-1.500 0h3" transform={`translate(${x} ${y}) rotate(${a})`} />
        ))}
        {STONES.map(([x, y, size, a]) => (
          <path
            key={`${x}-${y}`}
            d={`M${-size / 2} ${size / 3}L${size / 3} ${-size / 2}L${size / 2.5} ${size / 2.5}z`}
            transform={`translate(${x} ${y}) rotate(${a})`}
          />
        ))}
        {SPECKS.map((x, i) => (
          <path key={x} d={i % 2 ? "m0 0 2 2" : "m0 2 3-1"} stroke="#7c7f7c" transform={`translate(${x} ${405 + (i % 3) * 2})`} />
        ))}
      </g>
      <path d="M421 404.500h445M421 412.500h445" stroke="#5c5e5c" />
      <path d="M421 446.500h445M421.500 404v77" stroke="#333" />
      <path d="M421 480.500h445" stroke="#5a5a5a" />
      <path d="M349 404.500h59M349 412.500h59M360.500 384v48" stroke="#777" />
      <path d="m356 400 9 9M356 408l9 9" stroke="#777" />
      <text
        transform="translate(341 423) rotate(-90)"
        fontFamily="Liberation Sans, sans-serif"
        fontSize="28"
        fill="#111"
      >
        50
      </text>
    </svg>
  );
}

function ViewControls() {
  return (
    <div className="flex items-center h-4 bg-[#f0f0f0] text-[#333]">
      <span className="w-[62px] pl-[22px] whitespace-nowrap">1 : 50</span>
      <div className="flex items-center gap-0.5">
        <Svg w={15} h={12}><path d="M1.500 1.500h12v9h-12z" fill="#ddd" stroke="#555" /><path d="m2 4 3-3M2 8l7-7M3 11 13 1M7 11l6-6M10 11l3-3M2 7l4 4M2 3l8 8M5 1l8 8M9 1l4 4" stroke="#777" strokeWidth=".7" /></Svg>
        <Svg w={15} h={12}><path d="m1.500 4.500 3-3h9v6l-3 3h-9z" fill="#a9d2f5" stroke="#3c6fa0" /><path d="M1.500 4.500h9v6M10.500 4.500l3-3" stroke="#3c6fa0" /></Svg>
        <Svg w={14} h={12}><circle cx="5" cy="5" r="3.500" fill="#ffe28a" stroke="#d79b27" /><path d="m7 6 5 5M12 6l-5 5" stroke="#d8512a" strokeWidth="1.600" /></Svg>
        <Svg w={15} h={12}><circle cx="6" cy="5" r="4" fill="#b7d8f5" stroke="#5b88b3" /><path d="M1 11h6" stroke="#777" /><path d="m8 6 4 5M12 6l-4 5" stroke="#d8512a" strokeWidth="1.600" /></Svg>
        <Svg w={14} h={12}><path d="M1 8.500h3.500V3.500H13M6 1v7M11.500 2v6h-5" stroke="#2f6ca8" /><path d="M6 4h5v3H6z" fill="#e9c28a" /></Svg>
        <Svg w={15} h={12}><path d="M1 9.500h3V2.500h4M4 9V3M7.500 4v4H4" stroke="#2f6ca8" /><circle cx="11" cy="4.500" r="2.500" fill="#b7d8f5" stroke="#3c79b5" /><path d="M10.500 7v4h1V7" stroke="#777" /></Svg>
        <Svg w={15} h={12}><path d="M1 3c2-1 3 5 5 5 1.500 0 2-3 3.500-3s2 3 3.500 2 .500-4-1-5" stroke="#555" strokeWidth="1.200" /><circle cx="11" cy="7" r="2" stroke="#555" /></Svg>
        <Svg w={15} h={12}><circle cx="7" cy="4" r="2.500" fill="#b7d8f5" stroke="#3c97e0" /><path d="M6.500 7v3h1V7" stroke="#777" /></Svg>
        <Svg w={14} h={12}><path d="M1.500 1.500h10v9h-10z" stroke="#555" strokeDasharray="2 1" /><circle cx="9" cy="7" r="2.500" fill="#eee" stroke="#555" /></Svg>
        <Svg w={15} h={12}><path d="M1.500 4.500 5 1l4 3v6.500H1.500zM5.500 4v7M1 7.500h7" stroke="#555" fill="#ddd" /><circle cx="11" cy="5" r="2.500" fill="#b7d8f5" stroke="#3c79b5" /><path d="M10.500 8v3h1.500" stroke="#a33" /></Svg>
        <Svg w={15} h={12}><path d="M1.500 1v10M13.500 1v5M1 3.500h12M4 1.500 2 3.500l2 2M11 1.500l2 2-2 2" stroke="#444" /><path d="M7.500 7.500h6v3h-6z" fill="#999" stroke="#555" /></Svg>
      </div>
      <div className="flex items-center grow ml-1">
        <Chevron dir="left" />
        <div className="w-3.5 h-[13px] ml-40 bg-[#cdcdcd]" />
        <Chevron dir="right" className="ml-auto text-[#444]" />
      </div>
      <Svg w={8} className="ml-2 mr-px">
        <path d="M6 0h2v2H6zM3 3h2v2H3zM6 3h2v2H6zM0 6h2v2H0zM3 6h2v2H3zM6 6h2v2H6z" fill="#c5c5c5" />
      </Svg>
    </div>
  );
}

function NavigationBar() {
  return (
    <div className="absolute right-px top-0.5 w-[27px] h-[91px] flex flex-col items-center justify-between py-px rounded-md border-2 border-[#c8c8c8] bg-[#f4f4f4]">
      <Svg w={8} className="self-end"><circle cx="4" cy="4" r="2.500" stroke="#aaa" /><path d="m3 3 2 2M5 3 3 5" stroke="#aaa" strokeWidth=".7" /></Svg>
      <button title="Штурвал" className="flex flex-col items-center gap-1">
        <Svg w={20} h={18}>
          <circle cx="9" cy="8" r="7" stroke="#b8b8b8" strokeWidth="1.500" />
          <circle cx="9" cy="8" r="3" stroke="#b8b8b8" strokeWidth="1.500" />
          <path d="M2 8v8h6" stroke="#b8b8b8" strokeWidth="1.500" />
          <text x="9" y="17" fontSize="8" fontFamily="Open Sans, sans-serif" fill="#5b8fc7">2D</text>
        </Svg>
        <Caret className="text-[#aaa]" />
      </button>
      <i className="w-5 h-px bg-[#c9c9c9]" />
      <button title="Масштаб" className="flex flex-col items-center gap-2">
        <Svg w={14}>
          <path d="M1 1h9v8H1z" fill="#a9cf8f" stroke="#9bb98a" />
          <circle cx="8.500" cy="8" r="3" fill="#fff" stroke="#999" />
          <path d="m10.500 10.500 2.500 2.500" stroke="#999" strokeWidth="1.500" />
        </Svg>
        <Caret className="text-[#aaa]" />
      </button>
      <Svg w={8} className="self-end"><circle cx="4" cy="4" r="2.500" stroke="#aaa" /><path d="M2.500 4h3" stroke="#aaa" /></Svg>
    </div>
  );
}

function Canvas() {
  return (
    <main className="flex flex-col grow min-w-0 ml-[3px] bg-white">
      <div className="flex h-[17px] bg-[#ccc] text-[#333]">
        <div className="flex items-center w-[100px] pl-[3px] bg-white font-semibold">
          <Svg w={12} className="mr-1.5">
            <path d="M4 0v2.500L4 9.500V12l1-2 6-4-6-4z" fill="#2e333b" />
            <circle cx="4.500" cy="6" r="3" fill="#eee" stroke="#555" strokeWidth=".8" />
          </Svg>
          <span className="grow whitespace-nowrap">Section 0</span>
          <button title="Закрыть вид" className="mr-1">
            <Svg w={8}><path d="m1 1 6 6M7 1 1 7" stroke="#222" strokeWidth="1.500" /></Svg>
          </button>
        </div>
        <button title="Список видов" className="ml-auto mr-0.5">
          <Svg w={7} h={6}><path d="M0 .5h7" stroke="#333" /><path d="M0 2.500h7L3.500 6z" fill="#333" /></Svg>
        </button>
      </div>
      <div className="flex grow">
        <div className="relative grow overflow-hidden">
          <SectionDrawing />
          <NavigationBar />
        </div>
        <div className="flex flex-col items-center w-[13px] py-1 bg-[#f0f0f0]">
          <Chevron dir="up" />
          <div className="w-3 h-[14px] mt-[210px] bg-[#cdcdcd]" />
          <Chevron className="mt-auto text-[#444]" />
        </div>
      </div>
      <ViewControls />
    </main>
  );
}

const TREE = [
  {
    name: "Виды (all)",
    open: "+",
    icon: <><path d="M4 1.500H1.500V4M10 1.500h2.500V4M1.500 10v2.500H4M12.500 10v2.500H10" stroke="#777" /><path d="M4.500 5.500h4v4h-4zM4.500 5.500l1.500-2h4v4l-1.500 2" stroke="#68707a" /></>,
  },
  {
    name: "Легенды",
    icon: <><path d="M1.500 1.500h11v11h-11z" fill="#fff" stroke="#555" /><path d="M1 3h12" stroke="#555" strokeWidth="2" /><path d="M3 6.500h2M3 8.500h2M3 10.500h2M7 6.500h4M7 8.500h4M7 10.500h4" stroke="#555" /></>,
  },
  {
    name: "Ведомости/Спе",
    open: "+",
    icon: <><path d="M1.500 1.500h11v11h-11z" fill="#fff" stroke="#555" /><path d="M1 3h12" stroke="#555" strokeWidth="2" /><path d="M1 6.500h12M1 9.500h12M4.500 4v8M8.500 4v8" stroke="#999" /></>,
  },
  {
    name: "Листы (all)",
    open: "+",
    icon: <><path d="M1.500 2.500h8v9h-8z" fill="#dce6f0" stroke="#555" /><path d="M8 1.500h4.500v10H10M3.500 6.500h4v3h-4z" stroke="#4b6a8c" /></>,
  },
  {
    name: "Семейства",
    open: "+",
    icon: <><path d="M1.500 1.500h11v11h-11z" fill="#f5f5f5" stroke="#777" /><path d="M3.500 3.500h3v5h-3zM8.500 2v6.500h2V3M3 10.500h8" stroke="#666" /></>,
  },
  {
    name: "Группы",
    open: "+",
    icon: <><path d="M4 1.500H1.500v11H4M10 1.500h2.500v11H10" stroke="#555" /><circle cx="6" cy="5.500" r="2.500" fill="#dce6f0" stroke="#666" /><path d="M6.500 7.500h4v3h-4z" fill="#ddd" stroke="#666" /></>,
  },
  {
    name: "Связанные фай.",
    open: "-",
    icon: <><circle cx="4" cy="7" r="2.500" stroke="#e09a1a" strokeWidth="1.800" /><circle cx="10" cy="7" r="2.500" stroke="#e09a1a" strokeWidth="1.800" /><path d="M5 7h4" stroke="#a86c10" strokeWidth="1.500" /></>,
  },
];

function ProjectBrowser() {
  return (
    <aside className="flex flex-col w-[106px] shrink-0 pl-1 border-l border-[#bbb] bg-[#f0f0f0]">
      <div className="flex items-center h-[17px] pl-0.5 text-[#555]">
        <h2 className="grow whitespace-nowrap">Диспетчер проек...</h2>
        <button title="Закрыть" className="mr-1">
          <Svg w={8}><path d="m1 1 6 6M7 1 1 7" stroke="#333" strokeWidth="1.500" /></Svg>
        </button>
      </div>
      <ul className="grow bg-white overflow-hidden text-[#333]">
        {TREE.map((node, i) => (
          <li key={node.name} className="flex items-center h-[14px] pl-[3px] whitespace-nowrap">
            <span className="w-[7px] h-full flex shrink-0 items-center">
              {node.open ? (
                <Svg w={7}>
                  <path d="M.5.500h6v6h-6z" fill="#f8f8f8" stroke="#aaa" />
                  <path d={node.open === "+" ? "M2 3.500h3M3.500 2v3" : "M2 3.500h3"} stroke="#35579a" />
                </Svg>
              ) : (
                <i className="w-px h-full ml-[3px] border-l border-dotted border-[#999]" />
              )}
            </span>
            <i className="w-[5px] shrink-0 border-t border-dotted border-[#999]" />
            <Svg w={14} className="mr-0.5">{node.icon}</Svg>
            <span className={clsx("px-0.5 leading-[14px]", i === 0 && "bg-[#dedede]")}>{node.name}</span>
          </li>
        ))}
        <li className="flex items-center h-[14px] pl-[23px] whitespace-nowrap">
          <i className="w-2 h-2 -mt-2 mr-0.5 border-l border-b border-dotted border-[#999]" />
          <Svg w={12} className="mr-1"><path d="m2 2 8 9M10 1.500 2 10.500" stroke="#e03a2a" strokeWidth="2" /></Svg>
          rac_basic_sa
        </li>
      </ul>
      <div className="flex items-center h-4 pl-0.5 pr-0.5">
        <Chevron dir="left" />
        <div className="w-11 h-3 ml-[3px] bg-[#cdcdcd]" />
        <Chevron dir="right" className="ml-auto text-[#444]" />
      </div>
    </aside>
  );
}

function StatusBar() {
  const [exclude, setExclude] = useState(true);

  return (
    <footer className="flex items-center h-[18px] mx-0.5 pl-0.5 bg-[#c9c9c9] text-[#333] whitespace-nowrap">
      <p className="w-[385px]">Щелчок - выбор, TAB - варианты, CTRL - добавление, SHIFT - снятие выбора.</p>
      <Svg w={13}><path d="M4 4 7 1l3 3M2.500 5.500h3v6h-3zM8.500 5.500h3v6h-3z" fill="#b5b5b5" stroke="#8f8f8f" /></Svg>
      <label className="relative w-[161px] ml-1.5">
        <select aria-label="Рабочий набор" className="block appearance-none w-full h-[15px] bg-white" />
        <SelectArrow className="right-0.5 top-[5px] text-[#aaa]" />
      </label>
      <Svg w={14} className="ml-2"><path d="M4 1h9L9 6H7zM7 6l-4 7" fill="#d8d8d8" stroke="#8a8a8a" /></Svg>
      <span className="w-[27px] pl-0.5">:0</span>
      <Svg w={13}><path d="M1.500 1.500h11v10h-11z" fill="#eee" stroke="#444" /><path d="M1 3h12" stroke="#444" strokeWidth="2" /><path d="M3 6.500h2M4 9.500h2M6 6.500h5M8 9.500h3" stroke="#444" /></Svg>
      <Svg w={13} className="ml-1.5"><path d="M1 1h11v11H1z" fill="#a5a5a5" /><path d="M3 6v6l2-2 2 2M7 6h4v4" stroke="#e2e2e2" /></Svg>
      <label className="relative w-[161px] ml-1.5">
        <select aria-label="Вариант конструкции" className="block appearance-none w-full h-[15px] pl-0.5 bg-white">
          <option>Главная модель</option>
        </select>
        <SelectArrow className="right-0.5 top-[5px] text-[#666]" />
      </label>
      <label className="flex items-center gap-0.5 ml-2">
        <span className="relative">
          <input
            type="checkbox"
            checked={exclude}
            onChange={(e) => setExclude(e.target.checked)}
            className="block appearance-none size-[12px] bg-white border border-[#444]"
          />
          {exclude && (
            <Svg w={12} className="absolute inset-0 pointer-events-none">
              <path d="m3 6 2 3 4.500-6" stroke="#3f9a1f" strokeWidth="1.800" />
            </Svg>
          )}
        </span>
        Параметры исключения
      </label>
    </footer>
  );
}

export default function App() {
  return (
    <div className="relative flex flex-col min-h-screen bg-[#808080] pb-[3px] text-[9px] leading-[13px] font-['Open_Sans','Noto_Sans',sans-serif] cursor-default">
      <TitleBar />
      <TabBar />
      <Ribbon />
      <div className="flex h-[22px] gap-2.5 mx-0.5 pl-[5px] border-t border-[#8f8f8f] border-b-2 border-b-[#c8c8c8] bg-[#eee]">
        <i className="w-1.5 bg-[#e2efd6]" />
        <i className="w-1.5 bg-[#e2efd6]" />
      </div>
      <div className="flex grow mr-0.5 bg-[#e4e4e4]">
        <PropertiesPalette />
        <Canvas />
        <ProjectBrowser />
      </div>
      <StatusBar />
      <Svg w={11} h={16} className="absolute left-[535px] top-[18px] pointer-events-none">
        <path d="M1 1v12l3-3 2 5 2.500-1-2-4.500h4z" fill="#fff" stroke="#444" strokeWidth=".8" />
      </Svg>
    </div>
  );
}
